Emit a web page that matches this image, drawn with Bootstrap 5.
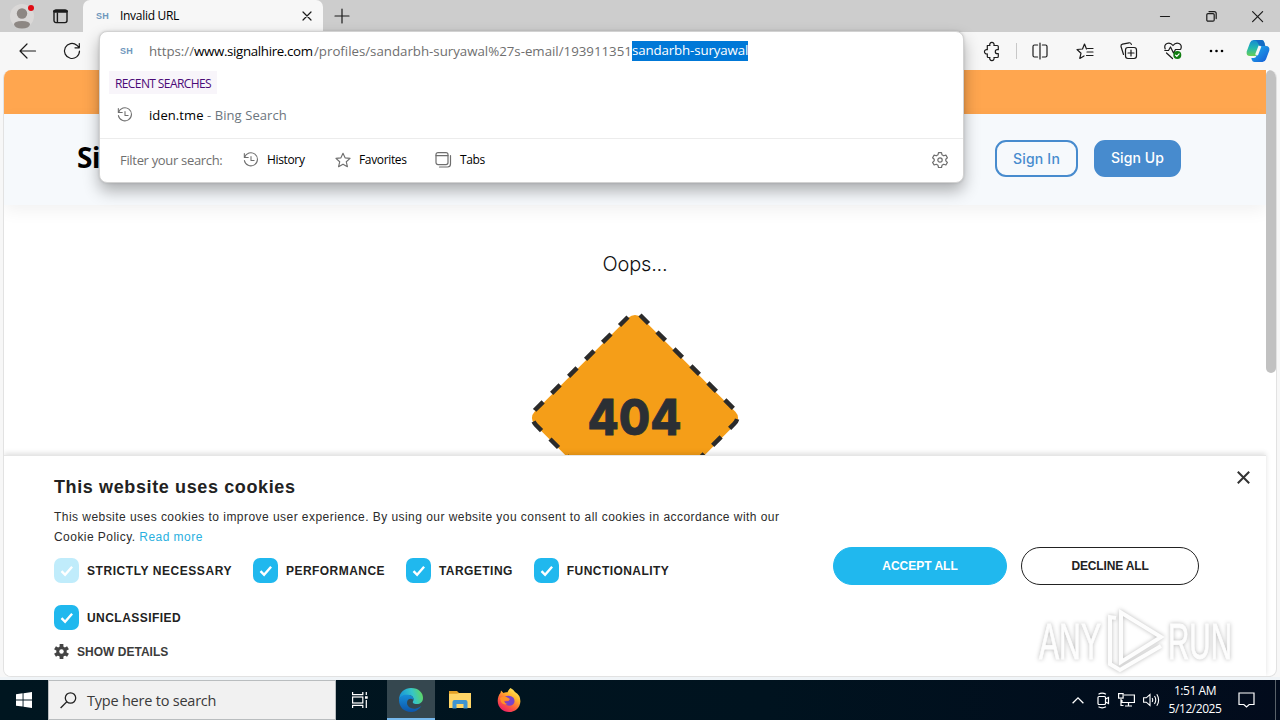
<!DOCTYPE html>
<html lang="en">
<head>
  <meta charset="UTF-8" />
  <meta name="viewport" content="width=device-width, initial-scale=1" />
  <title>Invalid URL</title>
  <link href="https://cdn.jsdelivr.net/npm/bootstrap@5.3.0/dist/css/bootstrap.min.css" rel="stylesheet" />
  <style>
    body {
      width: 1280px;
      height: 720px;
      overflow: hidden;
      background: #f7f7f7;
      color: #000;
      font-family: "Open Sans", "Noto Sans", sans-serif;
      font-size: 12px;
      line-height: 20px;
    }
    svg { display: block; flex: none; overflow: visible; }
    .ico { fill: none; stroke: #1b1b1b; stroke-width: 1.2; stroke-linecap: round; stroke-linejoin: round; }
    .ico-gray { stroke: #6e6e6e; }
    .text-nowrap { flex: none; }

    /* window chrome */
    .titlebar { height: 32px; background: #cdcdcd; padding-left: 10px; }
    .profile { width: 24px; height: 24px; }
    .tab { width: 240px; height: 32px; background: #f7f7f7; border-radius: 7px 7px 0 0; padding: 0 11px 0 13px; margin-left: 10px; }
    .tab-title { letter-spacing: -.3px; }
    .sh { font: 700 9px/20px "Liberation Sans", sans-serif; color: #6f97bd; letter-spacing: .3px; width: 24px; }
    .win-btns { gap: 35px; padding-right: 17px; }
    .toolbar { height: 38px; padding: 0 10px 0 19px; }
    .tool-sep { width: 1px; height: 16px; background: #c8c8c8; margin: 0 15px 0 16px; }
    .copilot { margin-left: 26px; }

    /* address drop-down */
    .omnibox { left: 99px; top: 31px; width: 865px; height: 152px; background: #fff; border: 1px solid #d2d2d2; border-radius: 8px; box-shadow: 0 8px 16px rgba(0,0,0,.3), 0 0 3px rgba(0,0,0,.14); z-index: 5; }
    .url-row { height: 39px; padding: 0 0 1px 20px; font-size: 13.3px; color: #6f6f6f; }
    .url-row .sh { width: 29px; }
    .u-scheme { width: 45px; letter-spacing: -.05px; }
    .u-host { width: 120px; color: #000; letter-spacing: -.34px; }
    .u-path { width: 318px; letter-spacing: -.02px; }
    .u-sel { width: 116px; height: 20px; line-height: 19px; background: #0078d7; color: #fff; letter-spacing: -.13px; }
    .recent { margin: 0 0 0 9px; width: 108px; height: 23px; line-height: 25px; padding-left: 6px; background: #f8f5fa; color: #4b0a77; letter-spacing: -.6px; }
    .hist-row { height: 44px; padding-left: 17px; gap: 16px; font-size: 13px; letter-spacing: .08px; padding-bottom: 2px; }
    .filter-row { height: 43px; border-top: 1px solid #ececec; padding: 0 15px 0 20px; }
    .f-label { width: 123px; font-size: 13px; color: #6f6f6f; letter-spacing: -.32px; }
    .f-item { gap: 8px; letter-spacing: -.35px; }
    .f-history { width: 92px; }
    .f-fav { width: 100px; }

    /* web page */
    .viewport { width: 1274px; height: 607px; margin-left: 3px; border: 1px solid #e2e2e2; border-top: 0; border-radius: 8px; overflow: hidden; background: #fff; }
    .site { width: 1262px; }
    .promo { height: 44px; background: #ffa64f; }
    .site-head { height: 91px; background: #f6f9fc; box-shadow: 0 6px 16px rgba(0,0,0,.055); padding: 0 85px 2px 73px; }
    .brand { font: 700 28px/40px "Noto Sans", sans-serif; color: #000; padding-bottom: 3px; letter-spacing: -.4px; }
    .sign { height: 37px; border-radius: 11px; font: 500 14px/32px "Inter", sans-serif; padding: 0; border: 2px solid #478bce; }
    .sign-in { width: 83px; color: #478bce; letter-spacing: .2px; }
    .sign-up { width: 87px; background: #478bce; color: #fff; letter-spacing: .1px; line-height: 30px; padding-bottom: 2px; }
    .missing { height: 250px; padding-top: 42px; overflow: hidden; }
    .oops { flex: none; font: 300 20px/35px "Inter", sans-serif; color: #111; letter-spacing: -.2px; height: 67px; }
    .err { font: 800 49px "Inter", sans-serif; fill: #2b2f34; stroke: #2b2f34; stroke-width: .8; }

    /* cookie panel */
    .cookies { height: 222px; background: #fff; border-top: 1px solid #e6e6e6; box-shadow: 0 -2px 5px rgba(0,0,0,.12); padding: 20px 0 0 50px; position: relative; font-family: "Liberation Sans", sans-serif; color: #2b2b2b; }
    .ck-main { width: 779px; }
    .ck-title { font-size: 18px; font-weight: 700; line-height: 22px; margin: 0 0 9px; letter-spacing: .62px; color: #222; }
    .ck-text { line-height: 20px; margin: 0 0 11px; letter-spacing: .455px; }
    .ck-text a { color: #29b0e0; text-decoration: none; }
    .ck-list { gap: 21px; margin-bottom: 22px; }
    .ck-opt { gap: 8px; height: 25px; font-size: 12px; font-weight: 700; color: #222; letter-spacing: .45px; }
    .ck-strict { letter-spacing: .56px; }
    .ck-show { letter-spacing: .02px; color: #3c3c3c; padding-top: 2px; }
    .ck-box { width: 25px; height: 25px; border-radius: 7px; background: #20b8ee; }
    .ck-box.locked { background: #c0ecfb; }
    .ck-btns { padding-top: 71px; gap: 14px; }
    .ck-btn { height: 38px; border-radius: 19px; font-size: 12px; font-weight: 700; padding: 0; line-height: 36px; border: 1px solid #222; letter-spacing: 0; }
    .ck-accept { width: 174px; background: #20b8ee; border-color: #20b8ee; color: #fff; }
    .ck-decline { width: 178px; color: #222; letter-spacing: -.15px; }
    .ck-x { right: 16px; top: 15px; }
    .watermark { right: 32px; top: 148px; filter: drop-shadow(0 0 2px rgba(0,0,0,.28)); }
    .watermark text { font: 400 50px "Liberation Sans", sans-serif; fill: #fdfdfd; stroke: #fdfdfd; stroke-width: .8; }
    .scroll-thumb { width: 10px; height: 303px; background: #c1c1c1; border-radius: 5px; }

    /* taskbar */
    .gap-strip { height: 3px; background: #f0f4f7; }
    .taskbar { height: 40px; background: linear-gradient(90deg, #001620, #00131f 60%, #020b1c); color: #fff; }
    .start { width: 48px; height: 40px; }
    .search { width: 288px; height: 40px; background: #f1f1f1; border: 1px solid #b9bdbf; padding-left: 11px; gap: 10px; color: #3a3a3a; font-size: 14.5px; }
    .search span { letter-spacing: -.22px; padding-top: 2px; }
    .task { width: 49px; height: 40px; }
    .task-view { width: 51px; padding-right: 3px; }
    .task.open { width: 48px; background: #35474f; border-bottom: 2px solid #76b9ed; padding-top: 2px; }
    .clock { width: 62px; line-height: 18px; letter-spacing: -.45px; margin: 0 12px 0 4px; }
    .peek { width: 5px; height: 40px; border-left: 1px solid #596169; margin-left: 20px; }
  </style>
</head>
<body>

  <!-- symbols used more than once -->
  <svg width="0" height="0" class="position-absolute">
    <symbol id="history" viewBox="0 0 18 18">
      <path d="M1.500 1.800v4.400h4.400M1.800 6A7.400 7.400 0 1 1 1.600 9.600M9 5v4.500h3.500" />
    </symbol>
    <symbol id="tick" viewBox="0 0 25 25">
      <path d="M7.500 13.200l3.600 3.600 7-8" fill="none" stroke="#fff" stroke-width="2.400" />
    </symbol>
  </svg>

  <div class="titlebar d-flex align-items-center">
    <svg class="profile" viewBox="0 0 24 24">
      <circle cx="12" cy="12" r="12" fill="#dad8d7" />
      <circle cx="12" cy="9.500" r="5.200" fill="#8d8783" />
      <path d="M4 20.500q0-3.500 8-3.500t8 3.500q-1 4-8 4t-8-4z" fill="#8d8783" />
      <circle cx="21" cy="4" r="3" fill="#e00b14" />
    </svg>
    <svg class="ms-4 ico" width="15" height="15" viewBox="0 0 15 15" transform="translate(-5)">
      <rect x="1" y="1" width="13" height="12.600" rx="2" stroke-width="1.400" />
      <path d="M4.400 4v9" stroke-width="1.400" /><path d="M1.500 2.300h12" stroke-width="2.800" />
    </svg>
    <div class="tab d-flex align-items-center">
      <span class="sh">SH</span>
      <span class="tab-title text-nowrap">Invalid URL</span>
      <svg class="ico ms-auto" width="10" height="10" viewBox="0 0 10 10"><path d="M1 1l8 8M9 1L1 9" /></svg>
    </div>
    <svg class="ico ms-2 ps-1" width="18" height="14" viewBox="0 0 14 14"><path d="M7 0v14M0 7h14" /></svg>
    <div class="win-btns d-flex align-items-center ms-auto">
      <svg class="ico" width="11" height="11" viewBox="0 0 11 11"><path d="M.500 5.500h9" /></svg>
      <svg class="ico" width="11" height="11" viewBox="0 0 11 11"><rect x=".800" y="2.600" width="7.400" height="7.600" rx="1.200" /><path d="M3 .600h5.200q2 0 2 2v5" /></svg>
      <svg class="ico" width="11" height="11" viewBox="0 0 11 11"><path d="M.600.600l10 10M10.600.600l-10 10" /></svg>
    </div>
  </div>

  <div class="toolbar d-flex align-items-center">
    <svg class="ico" width="17" height="16" viewBox="0 0 17 16"><path d="M16.500 8H1M8 1L1 8l7 7" /></svg>
    <svg class="ico ms-4" width="18" height="18" viewBox="0 0 18 18" transform="translate(3)"><path d="M16.500 9A7.500 7.500 0 1 1 13.800 3.200L16.300 5.700M16.300 1.500v4.300h-4.300" /></svg>
    <div class="d-flex align-items-center ms-auto">
      <svg class="ico" width="16" height="18" viewBox="0 0 16 18"><path d="M3.300 3.500h2.600a2.200 2.200 0 1 1 4 0h3.400q1 0 1 1v3.200h-1a2 2 0 1 0 0 4h1v2.800q0 1-1 1H9.900a2.200 2.200 0 1 1-4 0H4.300q-1 0-1-1v-2.600a2.200 2.200 0 1 1 0-4.200z" /></svg>
      <span class="tool-sep"></span>
      <svg class="ico" width="16" height="16" viewBox="0 0 16 16"><path d="M8 0v16M5.600 2H2.500Q1 2 1 3.500v9Q1 14 2.500 14h3.100M10.400 2h3.100Q15 2 15 3.500v9q0 1.500-1.500 1.500h-3.100" /></svg>
      <svg class="ico ms-4" width="18" height="16" viewBox="0 0 16 16" transform="translate(4)"><path d="M9.500 6L7.500 1 5.500 6 0 6.500l4 3.700L2.800 15.500 7 12.900M10.500 5.500H16M10 9h6M9.500 12.500H16" /></svg>
      <svg class="ico ms-4" width="18" height="18" viewBox="0 0 18 18" transform="translate(6)"><rect x="5.500" y="5.500" width="11" height="11" rx="2.400" /><path d="M11 8v6M8 11h6M3.500 12.500L1 4.500Q.700 2.700 2.500 2.200L9 .800q1.700-.300 2.400 1.600" /></svg>
      <svg class="ico ms-4" width="18" height="18" viewBox="0 0 18 18" transform="translate(8)"><path d="M1.200 7Q-.300 3 3 1.500 6.500.200 9 3.500 11.500.200 15 1.500q3.300 1.500 1.800 5.500M.800 8.500h3.700L6.500 5l3 6 2-3.500h4.700M2.500 11l6 5.500" /><circle cx="13.300" cy="13" r="4" fill="#107c10" stroke="none" /><path d="M11.500 13.100l1.300 1.300 2.300-2.500" stroke="#fff" /></svg>
      <svg class="ms-4" width="14" height="4" viewBox="0 0 14 4" transform="translate(11)"><circle cx="2" cy="2" r="1.300" /><circle cx="7.500" cy="2" r="1.300" /><circle cx="13" cy="2" r="1.300" /></svg>
      <svg class="copilot ps-2" width="32" height="24" viewBox="0 0 24 22">
        <defs>
          <linearGradient id="cpA" x1="0" y1="0" x2="0" y2="1"><stop offset="0" stop-color="#1689d3" /><stop offset=".5" stop-color="#22b7b0" /><stop offset="1" stop-color="#69cf55" /></linearGradient>
          <linearGradient id="cpB" x1="0" y1="0" x2="1" y2="1"><stop offset="0" stop-color="#1fb6ee" /><stop offset="1" stop-color="#1657d5" /></linearGradient>
        </defs>
        <path d="M7.500 0h8q2 0 2.700 2.300l.500 1.700h-2.500q-2 0-2.700 2.200L11 14.500Q10.500 16 9 16H4Q0 16 .700 11.500L4 2.700Q5 0 7.500 0z" fill="url(#cpA)" />
        <path d="M16.500 22h-8q-2 0-2.700-2.300L5.300 18h2.500q2 0 2.700-2.200L13 7.500Q13.500 6 15 6h5q4 0 3.300 4.500L20 19.300Q19 22 16.500 22z" fill="url(#cpB)" />
        <path d="M14 6l-3.500 9" stroke="#f7f7f7" stroke-width="3" fill="none" />
        <path d="M7.500 0h8q2 0 2.700 2.300l1.200 3.700H15q-1.500 0-2-1L11 1.500Q10 0 7.500 0z" fill="#146cc4" />
      </svg>
    </div>
  </div>

  <div class="viewport d-flex">
    <div class="site">
      <div class="promo"></div>
      <div class="site-head d-flex align-items-center">
        <span class="brand">Si</span>
        <div class="d-flex gap-3 ms-auto">
          <button type="button" class="btn sign sign-in">Sign In</button>
          <button type="button" class="btn sign sign-up">Sign Up</button>
        </div>
      </div>
      <div class="missing d-flex flex-column align-items-center">
        <div class="oops">Oops...</div>
        <svg width="212" height="210" viewBox="0 0 212 210">
          <rect x="30.500" y="28.500" width="151" height="151" rx="9" transform="rotate(45 106 104)" fill="#f59e18" />
          <g fill="none" stroke="#2b2b2b" stroke-width="4.500" stroke-dasharray="12 12">
            <path d="M111 1l94 94q7 8 0 15l-92 92" />
            <path d="M99 3L6 96q-6 7 1 15l92 92" />
          </g>
          <text class="err" x="105.500" y="121" text-anchor="middle" textLength="94" lengthAdjust="spacingAndGlyphs">404</text>
        </svg>
      </div>
      <div class="cookies d-flex">
        <div class="ck-main">
          <h2 class="ck-title">This website uses cookies</h2>
          <p class="ck-text"><span class="text-nowrap">This website uses cookies to improve user experience. By using our website you consent to all cookies in accordance with our</span><br />Cookie Policy. <a href="#">Read more</a></p>
          <div class="ck-list d-flex">
            <div class="ck-opt ck-strict d-flex align-items-center"><svg class="ck-box locked"><use href="#tick" /></svg>STRICTLY NECESSARY</div>
            <div class="ck-opt d-flex align-items-center"><svg class="ck-box"><use href="#tick" /></svg>PERFORMANCE</div>
            <div class="ck-opt d-flex align-items-center"><svg class="ck-box"><use href="#tick" /></svg>TARGETING</div>
            <div class="ck-opt d-flex align-items-center"><svg class="ck-box"><use href="#tick" /></svg>FUNCTIONALITY</div>
          </div>
          <div class="ck-opt d-flex align-items-center"><svg class="ck-box"><use href="#tick" /></svg>UNCLASSIFIED</div>
          <div class="ck-opt ck-show d-flex align-items-center mt-2">
            <svg width="15" height="15" viewBox="-8 -8 16 16"><g fill="#444"><circle r="5.500" /><rect x="-2" y="-8" width="4" height="16" /><rect x="-2" y="-8" width="4" height="16" transform="rotate(60)" /><rect x="-2" y="-8" width="4" height="16" transform="rotate(120)" /></g><circle r="2.400" fill="#fff" /></svg>
            <span>SHOW DETAILS</span>
          </div>
        </div>
        <div class="ck-btns d-flex align-items-start">
          <button type="button" class="btn ck-btn ck-accept">ACCEPT ALL</button>
          <button type="button" class="btn ck-btn ck-decline">DECLINE ALL</button>
        </div>
        <svg class="ck-x position-absolute" width="13" height="13" viewBox="0 0 13 13"><path d="M.800.800l11.400 11.400M12.200.800L.800 12.200" stroke="#333" stroke-width="2" /></svg>
        <svg class="watermark position-absolute" width="200" height="70" viewBox="0 0 200 70">
          <text x="5" y="55" textLength="62" lengthAdjust="spacingAndGlyphs">ANY</text>
          <text x="134" y="55" textLength="64" lengthAdjust="spacingAndGlyphs">RUN</text>
          <path d="M87 8.500l40 24.500-40 25zM82 14l-6-1v47l10 6 41-24" fill="none" stroke="#fdfdfd" stroke-width="4" />
        </svg>
      </div>
    </div>
    <div class="scroll-thumb"></div>
  </div>
  <div class="gap-strip"></div>

  <div class="omnibox position-absolute">
    <div class="url-row d-flex align-items-center">
      <span class="sh">SH</span><span class="u-scheme text-nowrap">https://</span><span class="u-host text-nowrap">www.signalhire.com</span><span class="u-path text-nowrap">/profiles/sandarbh-suryawal%27s-email/193911351</span><span class="u-sel text-nowrap">sandarbh-suryawal</span>
    </div>
    <div class="recent text-nowrap">RECENT SEARCHES</div>
    <div class="hist-row d-flex align-items-center">
      <svg class="ico ico-gray" width="16" height="16"><use href="#history" /></svg>
      <span>iden.tme <span class="text-secondary">- Bing Search</span></span>
    </div>
    <div class="filter-row d-flex align-items-center">
      <span class="f-label text-nowrap">Filter your search:</span>
      <div class="f-item f-history d-flex align-items-center"><svg class="ico ico-gray" width="16" height="16"><use href="#history" /></svg>History</div>
      <div class="f-item f-fav d-flex align-items-center"><svg class="ico ico-gray" width="16" height="16" viewBox="0 0 17 16"><path d="M8.500.800l2.200 4.900 5.300.600-4 3.600 1.200 5.200-4.700-2.700-4.700 2.700L5 9.900 1 6.300l5.300-.600z" /></svg>Favorites</div>
      <div class="f-item d-flex align-items-center"><svg class="ico ico-gray" width="17" height="16" viewBox="0 0 17 16"><rect x="1" y=".600" width="12" height="12" rx="2" /><path d="M1 3.600h12M15.500 3.500V12q0 3-3 3H4.500" /></svg>Tabs</div>
      <svg class="ico ico-gray ms-auto" width="16" height="16" viewBox="0 0 16 16"><path d="M6.500.600h3l.500 2.200 1.700 1 2.200-.700 1.500 2.600L13.800 7.200v1.700l1.600 1.500-1.500 2.600-2.200-.700-1.700 1-.500 2.200h-3L6 13.300l-1.700-1-2.200.700L.600 10.400l1.600-1.500V7.200L.600 5.700l1.500-2.600 2.200.700 1.700-1z" /><circle cx="8" cy="8" r="2.200" /></svg>
    </div>
  </div>

  <div class="taskbar d-flex align-items-center">
    <div class="start d-flex align-items-center justify-content-center">
      <svg width="16" height="16" viewBox="0 0 16 16" fill="#fff"><path d="M0 2.200l6.600-.900v6.200H0zM7.500 1.200L16 0v7.500H7.500zM0 8.400h6.600v6.200L0 13.700zM7.500 8.400H16V16l-8.500-1.200z" /></svg>
    </div>
    <div class="search d-flex align-items-center">
      <svg width="17" height="17" viewBox="0 0 17 17" fill="none" stroke="#222" stroke-width="1.300"><circle cx="10.500" cy="6" r="5.200" /><path d="M6.800 9.800L.600 16" /></svg>
      <span>Type here to search</span>
    </div>
    <div class="task task-view d-flex align-items-center justify-content-center">
      <svg width="16" height="16" viewBox="0 0 16 16" fill="none" stroke="#fff" stroke-width="1.200"><path d="M.600 0v2.600h10.200V0M.600 16v-2.600h10.200V16M14.300 0v3M14.300 8v8" /><rect x=".600" y="5" width="10.200" height="6" /><path d="M13 5.500h2.700" stroke-width="2.500" /></svg>
    </div>
    <div class="task open d-flex align-items-center justify-content-center">
      <svg width="24" height="24" viewBox="0 0 24 24">
        <defs>
          <linearGradient id="edA" x1="0" y1=".4" x2="1" y2=".2"><stop offset="0" stop-color="#1693d8" /><stop offset=".55" stop-color="#36c5c8" /><stop offset="1" stop-color="#63d957" /></linearGradient>
          <linearGradient id="edB" x1="0" y1="0" x2="0" y2="1"><stop offset="0" stop-color="#178ed9" /><stop offset="1" stop-color="#0d55aa" /></linearGradient>
        </defs>
        <path d="M0 12C0 4 6 0 12 0c8 0 12 5 12 10 0 4-3 6-6 6-4 0-5-1.500-3.700-3.200C15.600 10 13 7 9.500 7 5 7 1 9 0 12z" fill="url(#edA)" />
        <path d="M0 12C1 8 5 6 9 6.800c4 .600 6 3 5.600 5.500C13 10 8 10 8 15c0 4 5 6.500 9 5.500q3-.700 5.300-2.500C19 23 15 24 12 24 5 24 0 19 0 12z" fill="url(#edB)" />
      </svg>
    </div>
    <div class="task d-flex align-items-center justify-content-center">
      <svg width="22" height="18" viewBox="0 0 22 18"><path d="M0 0h8l2 2h12v5H0z" fill="#e3a126" /><path d="M0 2.800h8L10.500 2H22v15H0z" fill="#ffd566" /><path d="M3.500 17.500V11q0-2 2-2h11q2 0 2 2v6.500h-4V13h-7v4.500z" fill="#3e94d1" /></svg>
    </div>
    <div class="task d-flex align-items-center justify-content-center">
      <svg width="24" height="24" viewBox="0 0 24 24">
        <defs>
          <linearGradient id="ffA" x1=".85" y1="0" x2=".25" y2="1"><stop offset="0" stop-color="#fff36b" /><stop offset=".35" stop-color="#ffb62c" /><stop offset=".65" stop-color="#ff633b" /><stop offset="1" stop-color="#ed1b68" /></linearGradient>
        </defs>
        <path d="M13.500 0q3 1.500 4.500 4 5.500 3 5.400 9.400C23 20 18 24 12 24S.800 19.500.700 13C.700 9.300 2 6.500 3.500 5L4 2.500 6.500 5q1.800-1.200 4-.700Q11 2 13.500 0z" fill="url(#ffA)" />
        <path d="M8 8.500q5-2 8.500 1.300 2.300 4-.500 6.700-3.500 2.500-7 .200L7 13.500l4.500-.500 1.500-2z" fill="#7a43c9" />
        <path d="M3 10q3-2.500 6-1l3 1.500-1 1.300-4 1.200q1 3 4 3-5 1.500-7-2z" fill="#ff9228" />
      </svg>
    </div>
    <div class="d-flex align-items-center ms-auto">
      <svg width="12" height="7" viewBox="0 0 12 7" fill="none" stroke="#fff" stroke-width="1.300"><path d="M.600 6.200L6 .900l5.400 5.300" /></svg>
      <svg class="ms-2 ps-1" width="18" height="17" viewBox="0 0 14 17" fill="none" stroke="#fff" stroke-width="1.200"><rect x="2" y="4.500" width="7.500" height="8" rx="1" /><path d="M9.500 7l3-1.500v6l-3-1.500M2.500 2.200Q6 .200 10 2.200M2.500 14.800q3.500 2 7.500 0" /></svg>
      <svg class="ms-2" width="17" height="14" viewBox="0 0 17 14" fill="none" stroke="#fff" stroke-width="1.200"><path d="M6 2h10.400v7.500H4V7M10.500 9.500v3.500M7 13h7M3 6v6.500h2.500" /><rect x=".600" y=".600" width="4.500" height="4.500" /></svg>
      <svg class="ms-2" width="17" height="14" viewBox="0 0 17 14" fill="none" stroke="#fff" stroke-width="1.100"><path d="M.600 4.800h2.700L7 1.500v11L3.300 9.200H.600zM9.200 5q1.200 2 0 4M11.500 3q2.500 4 0 8M13.800 1.200q3.700 5.800 0 11.600" /></svg>
      <div class="clock text-center">1:51 AM<br />5/12/2025</div>
      <svg width="17" height="16" viewBox="0 0 17 16" fill="none" stroke="#fff" stroke-width="1.200"><path d="M1 1h15v11.500h-4.800L8.500 15l-2.700-2.500H1z" /></svg>
      <div class="peek"></div>
    </div>
  </div>

<script src="https://cdn.jsdelivr.net/npm/bootstrap@5.3.0/dist/js/bootstrap.bundle.min.js"></script>
</body>
</html>
